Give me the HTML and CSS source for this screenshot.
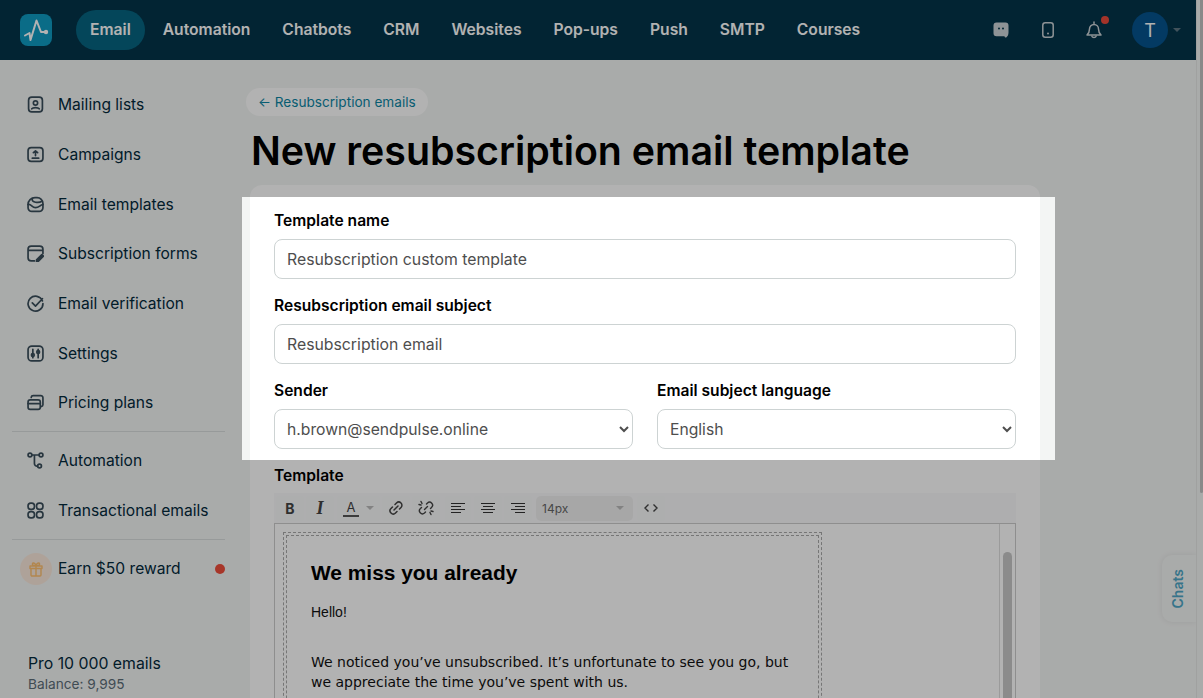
FILE: index.html
```html
<!DOCTYPE html>
<html lang="en">
<head>
<meta charset="utf-8">
<title>New resubscription email template</title>
<link rel="stylesheet" href="styles.css">
</head>
<body>
<div class="app">
  <header class="topbar">
    <svg class="logo" viewBox="0 0 32 32" width="32" height="32"><rect width="32" height="32" rx="8" fill="#0f9bc2"/><path d="M5 21.500l4.500-2.500 1 7L16.500 6.500 21 18h5.500" fill="none" stroke="#fff" stroke-width="2" stroke-linecap="round" stroke-linejoin="round"/><circle cx="26" cy="18" r="2.200" fill="#fff"/></svg>
    <nav class="mainnav">
      <a class="navitem active">Email</a><a class="navitem">Automation</a><a class="navitem">Chatbots</a><a class="navitem">CRM</a><a class="navitem">Websites</a><a class="navitem">Pop-ups</a><a class="navitem">Push</a><a class="navitem">SMTP</a><a class="navitem">Courses</a>
    </nav>
    <div class="topicons">
      <svg class="topicon" viewBox="0 0 16 16" width="16" height="16"><path d="M3.500 0.500h9A3 3 0 0 1 15.500 3.500v7c0 2.200-.8 4-2.300 5-.7.400-1.700-.3-1.700-1.200H3.500A3 3 0 0 1 .5 11.300V3.500A3 3 0 0 1 3.500.5z" fill="#ccd3d7"/><circle cx="6" cy="6.500" r="1" fill="#03344a"/><circle cx="10" cy="6.500" r="1" fill="#03344a"/></svg>
      <svg class="topicon phone" viewBox="0 0 12 16" width="12" height="16"><rect x=".8" y=".8" width="10.400" height="14.400" rx="2.500" fill="none" stroke="#ccd3d7" stroke-width="1.500"/><circle cx="6" cy="11.500" r="1" fill="#ccd3d7"/></svg>
      <span class="bell">
        <svg viewBox="0 0 16 18" width="16" height="18"><path d="M8 1v1.500M3.500 8a4.500 4.500 0 0 1 9 0c0 3 1 4.500 2.500 6H1c1.500-1.500 2.500-3 2.500-6zM6 15.500c.5 1.300 3.500 1.300 4 0" fill="none" stroke="#ccd3d7" stroke-width="1.500" stroke-linecap="round" stroke-linejoin="round"/></svg>
        <i class="bell-dot"></i>
      </span>
      <span class="avatar">T</span>
      <i class="caret"></i>
    </div>
  </header>

  <div class="body">
    <aside class="sidebar">
      <ul class="menu menu-main">
        <li><svg viewBox="0 0 16 16"><rect x="1.500" y="1" width="13" height="14" rx="3"/><circle cx="8" cy="6.500" r="2"/><path d="M4.500 12c1-1.500 6-1.500 7 0"/></svg>Mailing lists</li>
        <li><svg viewBox="0 0 16 16"><rect x="1" y="1.500" width="14" height="13" rx="3"/><path d="M8 9V4.500M6 6.200 8 4.500l2 1.700M5 11.500h6"/></svg>Campaigns</li>
        <li><svg viewBox="0 0 16 16"><path d="M1 8a6.500 6.500 0 0 1 6.500-6.500h2a5.500 5.500 0 0 1 5.500 5.500v4a3.500 3.500 0 0 1-3.500 3.500h-7A3.500 3.500 0 0 1 1 11z"/><path d="M1 8c3-1 3.500 3 7 3s4-2.500 7-3M5 3c-1 3 6 4 9 2"/></svg>Email templates</li>
        <li><svg viewBox="0 0 16 16"><path d="M7 15H4a3 3 0 0 1-3-3V4a3 3 0 0 1 3-3h8a3 3 0 0 1 3 3v4M1 5h14"/><path class="fill" d="m9 14 5-5 1.500 1.500-5 5H9z"/></svg>Subscription forms</li>
        <li><svg viewBox="0 0 16 16"><path d="M14.500 5.500A7 7 0 1 0 15 8M5 7.500l3 3 6.500-7"/></svg>Email verification</li>
        <li><svg viewBox="0 0 16 16"><rect x="1" y="1" width="14" height="14" rx="3.500"/><path d="M5.500 4v8M10.500 4v8"/><circle cx="5.500" cy="9.500" r="1.300"/><circle cx="10.500" cy="6.500" r="1.300"/></svg>Settings</li>
        <li><svg viewBox="0 0 16 16"><rect x="1" y="5.500" width="11.500" height="9" rx="2"/><path d="M1 9h11.500M4 3.300V3a1.800 1.800 0 0 1 1.800-1.500h7A2 2 0 0 1 15 3.500v6.500a2 2 0 0 1-1.500 1.800"/></svg>Pricing plans</li>
      </ul>
      <ul class="menu menu-rule">
        <li><svg viewBox="0 0 16 16"><circle cx="2.800" cy="2.800" r="1.800"/><circle cx="13.200" cy="2.800" r="1.800"/><circle cx="11.800" cy="13.200" r="1.800"/><path d="M4.600 2.800h6.800M7 2.800v8a2.400 2.400 0 0 0 3 2.400"/></svg>Automation</li>
        <li><svg viewBox="0 0 16 16"><rect x="1" y="1" width="6" height="6" rx="2.500"/><rect x="9" y="1" width="6" height="6" rx="2.500"/><rect x="1" y="9" width="6" height="6" rx="2.500"/><rect x="9" y="9" width="6" height="6" rx="2.500"/></svg>Transactional emails</li>
      </ul>
      <div class="reward">
        <span class="gift"><svg viewBox="0 0 16 16" width="16" height="16"><path d="M2 5h12v2.500H2zM3 7.500h10V14a1 1 0 0 1-1 1H4a1 1 0 0 1-1-1zM8 5v10M8 5C5 5 4 3.500 4.500 2.500S7.500 2 8 5c.5-3 3-3.500 3.500-2.500S11 5 8 5z" fill="none" stroke="#ffc070" stroke-width="1.400" stroke-linejoin="round"/></svg></span>
        <span class="reward-text">Earn $50 reward</span>
        <i class="reward-dot"></i>
      </div>
      <div class="plan">
        <div class="plan-name">Pro 10 000 emails</div>
        <div class="plan-balance">Balance: 9,995</div>
      </div>
    </aside>

    <main class="content">
      <a class="backlink">← Resubscription emails</a>
      <h1 class="title">New resubscription email template</h1>
      <section class="card">
        <div class="field">
          <label class="label">Template name</label>
          <input class="control" type="text" value="Resubscription custom template">
        </div>
        <div class="field">
          <label class="label">Resubscription email subject</label>
          <input class="control" type="text" value="Resubscription email">
        </div>
        <div class="field-row">
          <div class="field">
            <label class="label">Sender</label>
            <select class="control select"><option>h.brown@sendpulse.online</option></select>
          </div>
          <div class="field">
            <label class="label">Email subject language</label>
            <select class="control select"><option>English</option></select>
          </div>
        </div>
        <label class="label label-tight">Template</label>
        <div class="toolbar">
          <span class="tool bold">B</span>
          <span class="tool italic">I</span>
          <span class="tool color"><span class="color-a">A</span><i class="tri"></i></span>
          <span class="tool"><svg viewBox="0 0 16 16" width="16" height="16"><path d="M6 10l4-4M7 4.500l1.500-1.500a3 3 0 0 1 4.500 4.500L11.500 9M9 11.500 7.500 13A3 3 0 0 1 3 8.500L4.500 7" fill="none" stroke="#444" stroke-width="1.500" stroke-linecap="round"/></svg></span>
          <span class="tool"><svg viewBox="0 0 16 16" width="16" height="16"><path d="M8.500 4 9.500 3a3 3 0 0 1 4 4.500l-1 1M7.500 12l-1 1a3 3 0 0 1-4-4.500l1-1M6.500 9.500l3-3M3 1.500l1 2M1 4.500l2 .5M13 14.500l-1-2M15 11.500l-2-.5" fill="none" stroke="#444" stroke-width="1.400" stroke-linecap="round"/></svg></span>
          <span class="tool lines left"><i></i><i></i><i></i><i></i></span>
          <span class="tool lines center"><i></i><i></i><i></i><i></i></span>
          <span class="tool lines right"><i></i><i></i><i></i><i></i></span>
          <span class="fontsize">14px<i class="tri"></i></span>
          <span class="tool"><svg viewBox="0 0 14 10" width="14" height="10"><path d="M4.500 1.500 1 5l3.500 3.500M9.500 1.500 13 5 9.500 8.500" fill="none" stroke="#444" stroke-width="1.400"/></svg></span>
        </div>
        <div class="editor">
          <div class="editor-page">
            <div class="editor-inner">
              <h2 class="mail-title">We miss you already</h2>
              <p class="mail-hello">Hello!</p>
              <p class="mail-text">We noticed you’ve unsubscribed. It’s unfortunate to see you go, but we appreciate the time you’ve spent with us.</p>
            </div>
          </div>
          <div class="editor-scroll"><i></i></div>
        </div>
      </section>
    </main>
    <div class="chats"><span>Chats</span></div>
  </div>
  <div class="pagebar"><i></i></div>
</div>
<div class="spotlight"></div>
</body>
</html>
```
FILE: styles.css
```css
* { box-sizing: border-box; }
html, body { margin: 0; height: 100%; overflow: hidden; }
body { font-family: Inter, "Liberation Sans", sans-serif; background: #f3f5f4; color: #032a3c; }
ul { list-style: none; margin: 0; padding: 0; }
.app { height: 698px; position: relative; overflow: hidden; padding-right: 7px; }
.topbar { height: 60px; background: #03344a; display: flex; align-items: center; padding: 0 0 0 20px; }
.logo { flex: none; }
.mainnav { display: flex; align-items: center; margin-left: 24px; }
.navitem { font-size: 15.650px; font-weight: 600; color: #fff; padding: 0 14px; height: 40px; line-height: 39px; border-radius: 20px; margin-right: 4px; }
.navitem.active { background: #076581; }
.topicons { margin-left: auto; display: flex; align-items: center; padding-right: 15px; }
.topicon { display: block; margin-right: 33px; }
.phone { margin-right: 32px; }
.bell { position: relative; display: block; height: 18px; margin-right: 30px; }
.bell-dot { position: absolute; top: -5px; right: -7px; width: 8px; height: 8px; border-radius: 50%; background: #ea4a3c; }
.avatar { width: 36px; height: 36px; border-radius: 50%; background: #05538e; color: #fff; font-size: 18px; display: flex; align-items: center; justify-content: center; }
.caret { width: 0; height: 0; margin-left: 5px; border: 4px solid transparent; border-top: 4px solid #5d7683; border-bottom: 0; }
.body { display: flex; height: 638px; position: relative; }
.sidebar { width: 238px; flex: none; padding: 20px 0 0 12px; position: relative; height: 638px; }
.menu { width: 213px; }
.menu li { display: flex; align-items: center; height: 49.700px; padding-left: 15px; font-size: 15.600px; color: #032a3c; }
.menu svg { width: 17px; height: 17px; flex: none; margin-right: 14px; fill: none; stroke: #3a4e5b; stroke-width: 1.600; stroke-linecap: round; stroke-linejoin: round; }
.menu svg .fill { fill: #3a4e5b; }
.menu-main { padding-bottom: 3px; }
.menu-rule { border-top: 1px solid #d9dddd; border-bottom: 1px solid #d9dddd; padding: 4px 0; }
.reward { width: 213px; height: 57px; display: flex; align-items: center; padding-left: 8px; }
.gift { width: 32px; height: 32px; border-radius: 50%; background: #f9e9dc; display: flex; align-items: center; justify-content: center; margin-right: 6px; }
.reward-text { font-size: 15.600px; }
.reward-dot { width: 10px; height: 10px; border-radius: 50%; background: #f04e3c; margin-left: auto; }
.plan { position: absolute; left: 28px; top: 594px; }
.plan-name { font-size: 15.800px; line-height: 20px; }
.plan-balance { font-size: 13.700px; line-height: 21px; color: #5c6d78; }
.content { width: 790px; flex: none; }
.backlink { display: inline-block; margin: 28px 0 0 8px; height: 28px; line-height: 28px; padding: 0 12px; border-radius: 14px; background: #fff; color: #0c86a4; font-size: 13.600px; }
.title { margin: 10px 0 0 13px; font-size: 39.300px; line-height: 50px; font-weight: 600; color: #000; }
.card { margin: 9px 0 0 12px; background: #fff; border-radius: 12px; padding: 26px 24px 0; height: 600px; width: 790px; }
.field { margin-bottom: 17px; }
.field-row { display: grid; grid-template-columns: 359px 359px; gap: 24px; }
.label { display: block; font-size: 15.600px; line-height: 20px; font-weight: 600; color: #000; margin-bottom: 8px; }
.label-tight { margin-bottom: 7px; }
.control { display: block; width: 100%; height: 40px; border: 1px solid #cdd3d3; border-radius: 8px; padding: 0 12px; font: 15.800px Inter, "Liberation Sans", sans-serif; color: #4e4e4e; background: #fff; outline: none; }
.select { padding-left: 8px; font-size: 15.700px; }
.toolbar { display: flex; align-items: center; gap: 2px; height: 30px; background: #f9f9fb; padding-left: 2px; }
.tool { height: 25px; width: 28px; display: flex; align-items: center; justify-content: center; color: #444; font-size: 14px; background: #f8f9f9; border-radius: 3px; }
.bold { font-weight: 700; }
.italic { font-style: italic; font-weight: 700; font-family: "Liberation Serif", serif; font-size: 18px; }
.color { width: 43px; gap: 7px; margin-left: 1px; }
.color-a { display: block; width: 16px; text-align: center; line-height: 15px; font-size: 13px; border-bottom: 2px solid #555; }
.tri { width: 0; height: 0; border: 4px solid transparent; border-top: 4px solid #bbb; border-bottom: 0; }
.lines { flex-direction: column; gap: 1.400px; }
.lines i { display: block; height: 1.500px; width: 14px; background: #333; }
.lines.left { align-items: flex-start; padding-left: 6px; margin-left: 3px; width: 26px; }
.lines.left i:nth-child(even), .lines.center i:nth-child(even), .lines.right i:nth-child(even) { width: 10px; }
.lines.center { margin-left: 1px; }
.lines.right { align-items: flex-end; padding-right: 7px; }
.fontsize { width: 97px; height: 25px; background: #f0f0f0; border-radius: 5px; display: flex; align-items: center; justify-content: space-between; padding: 0 9px 0 6px; font-size: 12px; color: #666; margin: 0 2px; }
.editor { position: relative; border: 1px solid #ccc; height: 400px; display: flex; justify-content: space-between; }
.editor-page { width: 539px; margin: 8px 0 0 8px; border: 1px dashed #aaa; padding: 2px; height: 380px; }
.editor-inner { border: 1px dashed #aaa; height: 100%; padding: 23px 24px; }
.mail-title { margin: 0 0 15px; font: 700 20.900px/28px "Liberation Sans", Arial, sans-serif; color: #000; }
.mail-hello { margin: 0; font: 14px/20px "Liberation Sans", Arial, sans-serif; color: #111; }
.mail-text { margin: 30px 0 0; font: 14px/20px "DejaVu Sans", Verdana, sans-serif; color: #111; }
.editor-scroll { width: 16px; border-left: 1px solid #dedede; padding: 28px 0 0 3px; }
.editor-scroll i { display: block; width: 9px; height: 300px; border-radius: 5px; background: #c8c8c8; }
.chats { position: absolute; right: 0; top: 495px; width: 34px; height: 67px; padding-right: 4px; background: #f3f5f4; border-radius: 10px 0 0 10px; box-shadow: 0 0 6px rgba(0,0,0,.08); display: flex; align-items: center; justify-content: center; }
.chats span { writing-mode: vertical-rl; transform: rotate(180deg); font-size: 14px; font-weight: 600; color: #4fa7c6; }
.pagebar { position: absolute; top: 0; right: 0; width: 7px; height: 698px; background: #f3f5f4; border-left: 1px solid #e5e7e6; }
.pagebar i { display: block; margin-left: 3px; width: 3px; height: 493px; background: #c5c5c5; border-radius: 0 0 2px 2px; }
.spotlight { position: absolute; left: 242px; top: 197px; width: 813px; height: 263px; box-shadow: 0 0 0 2000px rgba(0,0,0,.3); pointer-events: none; }
```
